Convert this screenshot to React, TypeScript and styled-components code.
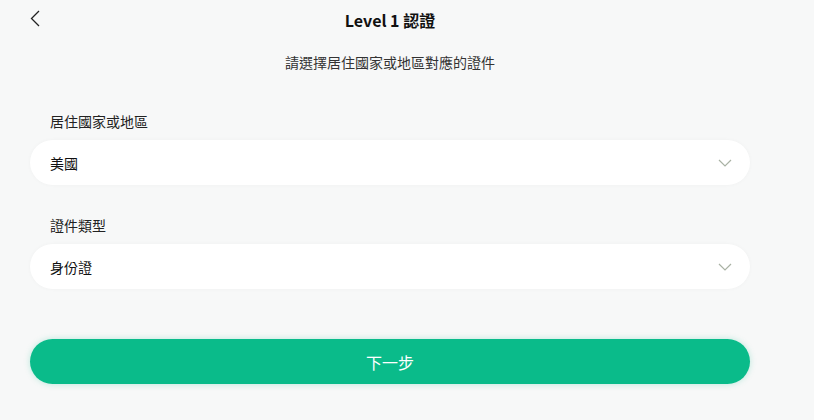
import styled, { createGlobalStyle } from "styled-components";
import { memo } from "react";

const GlobalStyle = createGlobalStyle`
  html, body {
    margin: 0;
    padding: 0;
    background: #f7f8f8;
  }
  body {
    font-family: "Noto Sans CJK TC", "Noto Sans", sans-serif;
    color: #222;
  }
`;

const Page = styled("div")`
  width: 720px;
  margin-left: 30px;
  height: 420px;
`;

const Header = styled("div")`
  position: relative;
  height: 40px;
  display: flex;
  align-items: center;
  justify-content: center;
  .back {
    position: absolute;
    left: 0;
    top: 10px;
    width: 10px;
    height: 17px;
    cursor: pointer;
  }
`;

const Title = styled("h1")`
  margin: 0;
  font-size: 16px;
  font-weight: 700;
  color: #111;
  line-height: 20px;
`;

const Subtitle = styled("p")`
  margin: 12px 0 0;
  text-align: center;
  font-size: 14px;
  line-height: 20px;
  color: #333;
`;

const Form = styled("div")`
  display: flex;
  flex-direction: column;
  margin-top: 39px;
`;

const Label = styled("label")`
  display: block;
  padding-left: 20px;
  font-size: 14px;
  line-height: 20px;
  color: #222;
  margin-bottom: 9px;
`;

const Field = styled("div")<{ $last?: boolean }>`
  margin-bottom: ${(p) => (p.$last ? "0" : "30px")};
`;

const Select = styled("div")`
  display: flex;
  align-items: center;
  justify-content: space-between;
  height: 45px;
  padding: 0 18px 0 20px;
  background: #fff;
  border-radius: 23px;
  box-shadow: 0 0 4px rgba(0, 0, 0, 0.03);
  font-size: 14px;
  color: #111;
  cursor: pointer;
`;

const NextButton = styled("button")`
  display: block;
  width: 100%;
  height: 45px;
  margin-top: 50px;
  border: none;
  border-radius: 23px;
  background: #0abb8a;
  box-shadow: 0 0 6px rgba(10, 187, 138, 0.25);
  color: #fff;
  font-family: inherit;
  font-size: 16px;
  cursor: pointer;
`;

const Chevron = () => (
  <svg width="14" height="8" viewBox="0 0 14 8" fill="none">
    <path d="M1 1l6 6 6-6" stroke="#a9b2a4" strokeWidth="1.2" />
  </svg>
);

const fields = [
  { label: "居住國家或地區", value: "美國" },
  { label: "證件類型", value: "身份證" },
];

export default memo(function App() {
  return (
    <>
      <GlobalStyle />
      <Page>
        <Header>
          <svg className="back" viewBox="0 0 10 17" fill="none">
            <path d="M9 1L1.5 8.5 9 16" stroke="#222" strokeWidth="1.3" />
          </svg>
          <Title>Level 1 認證</Title>
        </Header>
        <Subtitle>請選擇居住國家或地區對應的證件</Subtitle>
        <Form>
          {fields.map((f, i) => (
            <Field key={f.label} $last={i === fields.length - 1}>
              <Label>{f.label}</Label>
              <Select>
                <span>{f.value}</span>
                <Chevron />
              </Select>
            </Field>
          ))}
        </Form>
        <NextButton>下一步</NextButton>
      </Page>
    </>
  );
});
